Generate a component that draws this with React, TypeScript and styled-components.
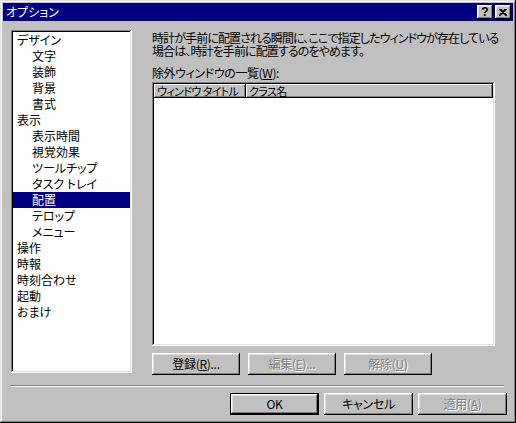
import React from 'react';
import styled, { createGlobalStyle } from 'styled-components';

const GlobalStyle = createGlobalStyle`
  html, body {
    margin: 0;
    padding: 0;
    background: #c0c0c0;
  }
  body {
    font-family: "Noto Sans CJK JP", "Noto Sans", sans-serif;
    font-size: 12px;
    color: #000;
  }
`;

const Window = styled.div`
  width: 516px;
  height: 423px;
  box-sizing: border-box;
  padding: 3px;
  background: #c0c0c0;
  box-shadow: inset -1px -1px #000, inset 1px 1px #dfdfdf, inset -2px -2px #808080, inset 2px 2px #fff;
  display: flex;
  flex-direction: column;
`;

const TitleBar = styled.div`
  height: 18px;
  background: #000080;
  color: #fff;
  display: flex;
  align-items: center;
  padding: 0 2px 0 3px;
  .title {
    flex: 1;
    font-size: 12px;
    line-height: 18px;
    font-feature-settings: "palt";
  }
`;

const TitleButton = styled.div<{ $gap?: number }>`
  width: 16px;
  height: 14px;
  box-sizing: border-box;
  margin-left: ${(p) => p.$gap ?? 0}px;
  background: #c0c0c0;
  box-shadow: inset -1px -1px #000, inset 1px 1px #fff, inset -2px -2px #808080, inset 2px 2px #dfdfdf;
  display: flex;
  align-items: center;
  justify-content: center;
  color: #000;
  font-family: "Liberation Sans", Arial, sans-serif;
  font-weight: bold;
  font-size: 12px;
  line-height: 14px;
`;

const Body = styled.div`
  flex: 1;
  padding: 9px 8px 0 8px;
  display: flex;
  flex-direction: column;
`;

const TopArea = styled.div`
  display: flex;
  align-items: flex-start;
  gap: 20px;
`;

const Sunken = styled.div`
  background: #fff;
  box-sizing: border-box;
  padding: 2px;
  box-shadow: inset -1px -1px #fff, inset 1px 1px #808080, inset -2px -2px #dfdfdf, inset 2px 2px #000;
`;

const TreeBox = styled(Sunken)`
  width: 121px;
  height: 343px;
`;

const TreeItem = styled.div<{ $level: number; $selected?: boolean }>`
  height: 16px;
  line-height: 16px;
  padding-left: ${(p) => (p.$level === 0 ? 4 : 19)}px;
  background: ${(p) => (p.$selected ? '#000080' : 'transparent')};
  color: ${(p) => (p.$selected ? '#fff' : '#000')};
  white-space: nowrap;
  font-feature-settings: "palt";
`;

const RightPane = styled.div`
  width: 343px;
  display: flex;
  flex-direction: column;
`;

const Description = styled.div`
  margin-top: 1px;
  line-height: 13px;
  white-space: nowrap;
  font-feature-settings: "palt";
  letter-spacing: -0.9px;
`;

const Label = styled.div`
  margin-top: 9px;
  line-height: 13px;
  font-feature-settings: "palt";
  letter-spacing: -0.4px;
`;

const ListView = styled(Sunken)`
  margin-top: 3px;
  height: 264px;
`;

const ListHeader = styled.div`
  display: grid;
  grid-template-columns: 92px 1fr;
  height: 14px;
`;

const HeaderCell = styled.div`
  background: #c0c0c0;
  box-shadow: inset -1px -1px #000, inset 1px 1px #fff, inset -2px -2px #808080;
  padding-left: 3px;
  font-size: 11px;
  line-height: 14px;
  white-space: nowrap;
  overflow: hidden;
  font-feature-settings: "palt";
  letter-spacing: -0.6px;
`;

const ButtonRow = styled.div<{ $gap: number; $end?: boolean }>`
  display: flex;
  gap: ${(p) => p.$gap}px;
  justify-content: ${(p) => (p.$end ? 'flex-end' : 'flex-start')};
`;

const Button = styled.div<{ $default?: boolean; $disabled?: boolean; $width: number }>`
  width: ${(p) => p.$width}px;
  height: 22px;
  box-sizing: border-box;
  background: #c0c0c0;
  display: flex;
  align-items: center;
  justify-content: center;
  line-height: 14px;
  font-feature-settings: "palt";
  letter-spacing: -0.3px;
  color: ${(p) => (p.$disabled ? '#808080' : '#000')};
  text-shadow: ${(p) => (p.$disabled ? '1px 1px 0 #fff' : 'none')};
  border: ${(p) => (p.$default ? '1px solid #000' : 'none')};
  box-shadow: inset -1px -1px #000, inset 1px 1px #fff, inset -2px -2px #808080, inset 2px 2px #dfdfdf;
  u {
    text-decoration-thickness: 1px;
    text-underline-offset: 1px;
  }
`;

const Separator = styled.div`
  margin-top: 10px;
  width: 493px;
  height: 2px;
  border-top: 1px solid #808080;
  border-bottom: 1px solid #fff;
  box-sizing: border-box;
`;

const BottomRow = styled(ButtonRow)`
  margin-top: 6px;
  margin-right: -2px;
`;

const treeItems: { label: string; level: number }[] = [
  { label: 'デザイン', level: 0 },
  { label: '文字', level: 1 },
  { label: '装飾', level: 1 },
  { label: '背景', level: 1 },
  { label: '書式', level: 1 },
  { label: '表示', level: 0 },
  { label: '表示時間', level: 1 },
  { label: '視覚効果', level: 1 },
  { label: 'ツールチップ', level: 1 },
  { label: 'タスク トレイ', level: 1 },
  { label: '配置', level: 1 },
  { label: 'テロップ', level: 1 },
  { label: 'メニュー', level: 1 },
  { label: '操作', level: 0 },
  { label: '時報', level: 0 },
  { label: '時刻合わせ', level: 0 },
  { label: '起動', level: 0 },
  { label: 'おまけ', level: 0 },
];

export default function App() {
  return (
    <>
      <GlobalStyle />
      <Window>
        <TitleBar>
          <span className='title'>オプション</span>
          <TitleButton>?</TitleButton>
          <TitleButton $gap={2}>
            <svg width='8' height='7' viewBox='0 0 8 7'>
              <path d='M0.5 0 L7.5 7 M1.5 0 L8 6.5 M7.5 0 L0.5 7 M6.5 0 L0 6.5' stroke='#000' strokeWidth='1.2' />
            </svg>
          </TitleButton>
        </TitleBar>
        <Body>
          <TopArea>
            <TreeBox>
              {treeItems.map((item) => (
                <TreeItem key={item.label} $level={item.level} $selected={item.label === '配置'}>
                  {item.label}
                </TreeItem>
              ))}
            </TreeBox>
            <RightPane>
              <Description>
                時計が手前に配置される瞬間に、ここで指定したウィンドウが存在している
                <br />
                場合は、時計を手前に配置するのをやめます。
              </Description>
              <Label>
                除外ウィンドウの一覧(<u>W</u>):
              </Label>
              <ListView>
                <ListHeader>
                  <HeaderCell>ウィンドウ タイトル</HeaderCell>
                  <HeaderCell>クラス名</HeaderCell>
                </ListHeader>
              </ListView>
              <ButtonRow $gap={8} style={{ marginTop: 7 }}>
                <Button $width={88}>
                  登録(<u>R</u>)...
                </Button>
                <Button $width={88} $disabled>
                  編集(<u>E</u>)...
                </Button>
                <Button $width={88} $disabled>
                  解除(<u>U</u>)
                </Button>
              </ButtonRow>
            </RightPane>
          </TopArea>
          <Separator />
          <BottomRow $gap={5} $end>
            <Button $width={89} $default>
              OK
            </Button>
            <Button $width={89}>キャンセル</Button>
            <Button $width={89} $disabled>
              適用(<u>A</u>)
            </Button>
          </BottomRow>
        </Body>
      </Window>
    </>
  );
}
